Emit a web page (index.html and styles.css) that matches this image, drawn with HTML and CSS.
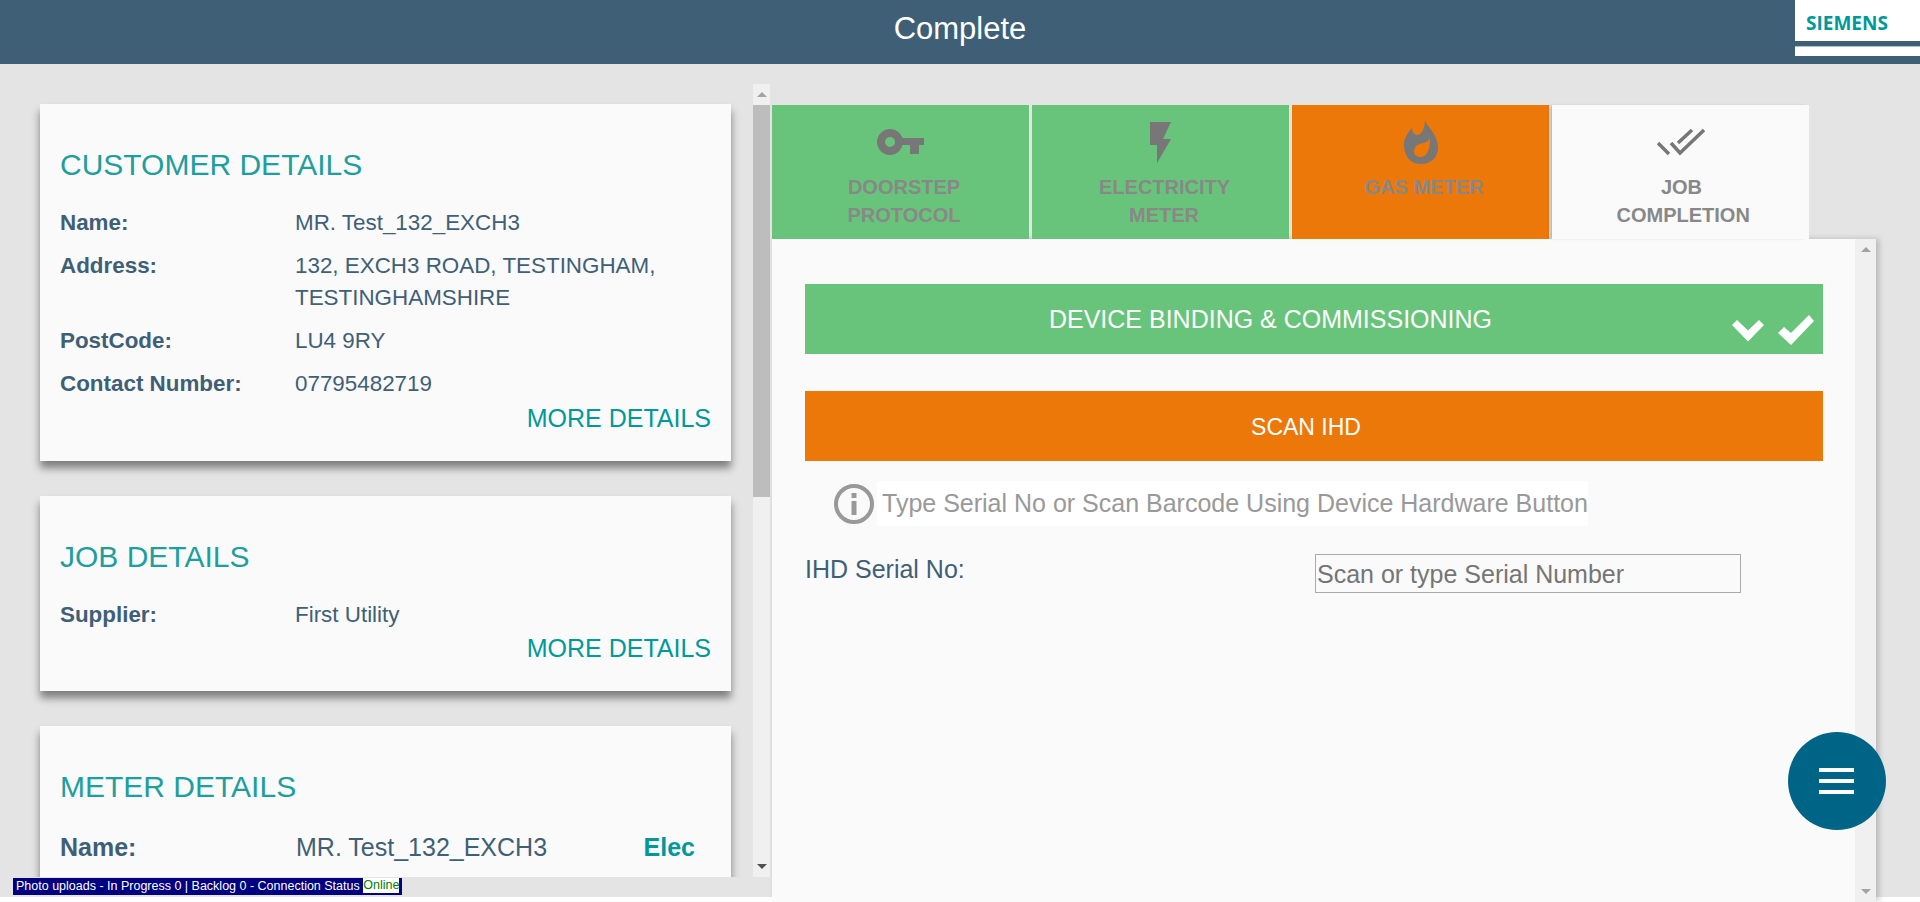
FILE: index.html
```html
<!DOCTYPE html>
<html>
<head>
	<title>Complete</title>
	<link rel="stylesheet" href="styles.css">
</head>
<body>
	<header class="topbar">
		<span></span>
		<h1 class="page-title">Complete</h1>
		<div class="logo">
			<div class="logo-text">SIEMENS</div>
			<div class="logo-strip"></div>
		</div>
	</header>

	<div class="main">
		<div class="left-col">
			<div class="left-pane">
				<div class="cards">
					<section class="card">
						<h2 class="card-title">CUSTOMER DETAILS</h2>
						<div class="details">
							<div class="label">Name:</div><div class="value">MR. Test_132_EXCH3</div>
							<div class="label">Address:</div><div class="value">132, EXCH3 ROAD, TESTINGHAM, TESTINGHAMSHIRE</div>
							<div class="label">PostCode:</div><div class="value">LU4 9RY</div>
							<div class="label">Contact Number:</div><div class="value">07795482719</div>
						</div>
						<div class="more more-customer">MORE DETAILS</div>
					</section>
					<section class="card">
						<h2 class="card-title">JOB DETAILS</h2>
						<div class="details">
							<div class="label">Supplier:</div><div class="value">First Utility</div>
						</div>
						<div class="more">MORE DETAILS</div>
					</section>
					<section class="card card-meter">
						<h2 class="card-title">METER DETAILS</h2>
						<div class="meter-row">
							<div class="label">Name:</div>
							<div class="value">MR. Test_132_EXCH3</div>
							<div class="meter-type">Elec</div>
						</div>
					</section>
				</div>
				<div class="scrollbar scrollbar-left">
					<div class="arrow-box"><span class="arrow-up"></span></div>
					<div class="thumb"></div>
					<div class="track"></div>
					<div class="arrow-box"><span class="arrow-down arrow-dark"></span></div>
				</div>
			</div>
			<div class="status-strip">
				<div class="status">Photo uploads - In Progress 0 | Backlog 0 - Connection Status <span class="online">Online</span></div>
			</div>
		</div>

		<div class="right-col">
			<div class="tabs">
				<div class="tab tab-done">
					<div class="tab-icon">
						<svg width="47" height="26" viewBox="0 0 47 26"><path fill-rule="evenodd" fill="#777" d="M13 0C19 0 24 4 25.500 9H47V16H42V25H33V16H25.500C24 22 19 26 13 26C6 26 0 20 0 13C0 6 6 0 13 0ZM13 8A5 5 0 1 0 13 18A5 5 0 1 0 13 8Z"/></svg>
					</div>
					<div class="tab-label">DOORSTEP PROTOCOL</div>
				</div>
				<div class="tab tab-done">
					<div class="tab-icon">
						<svg width="21" height="41" viewBox="0 0 21 41"><polygon fill="#777" points="0,0 21,0 13,17 21,17 7,41 7,23 0,23"/></svg>
					</div>
					<div class="tab-label">ELECTRICITY METER</div>
				</div>
				<div class="tab tab-active">
					<div class="tab-icon">
						<svg width="34" height="44" viewBox="0 0 34 44"><path fill-rule="evenodd" fill="#777" d="M21 0C22 6 34 14 34 28C34 37 27 44 17 44C7 44 0 37 0 25C0 17 5 11 8 8C8 11 10 15 13 15C18 15 21 8 21 0ZM26 18C24 22 20 23 16 24C12 25 10 28 10 32C10 35 13 37 17 37C22 37 26 32 26 18Z"/></svg>
					</div>
					<div class="tab-label">GAS METER</div>
				</div>
				<div class="tab tab-todo">
					<div class="tab-icon">
						<svg width="48" height="28" viewBox="0 0 48 28"><path fill="none" stroke="#777" stroke-width="3.500" d="M1 15L12 26M14 15L23 25L47 2M21 15L35 2"/></svg>
					</div>
					<div class="tab-label">JOB COMPLETION</div>
				</div>
			</div>

			<div class="panel">
				<div class="panel-body">
					<div class="bar bar-green">
						DEVICE BINDING &amp; COMMISSIONING
						<div class="bar-checks">
							<svg width="32" height="23" viewBox="0 0 32 23"><polygon fill="#fff" points="0,6 5,1 16,11.500 27,1 32,6 16,22.500"/></svg>
							<svg width="36" height="30" viewBox="0 0 36 30"><polygon fill="#fff" points="0,18 6,12 13,18 31,0 36,6 13,30"/></svg>
						</div>
					</div>
					<div class="bar bar-orange">SCAN IHD</div>
					<div class="hint">
						<svg width="40" height="40" viewBox="0 0 40 40">
							<circle cx="20" cy="20" r="18" fill="none" stroke="#999" stroke-width="4"/>
							<rect x="17.500" y="9" width="5" height="5" fill="#999"/>
							<rect x="17.500" y="17" width="5" height="14" fill="#999"/>
						</svg>
						<span class="hint-text">Type Serial No or Scan Barcode Using Device Hardware Button</span>
					</div>
					<div class="field">
						<label class="field-label">IHD Serial No:</label>
						<input class="field-input" type="text" placeholder="Scan or type Serial Number">
					</div>
				</div>
				<div class="scrollbar scrollbar-panel">
					<div class="arrow-box"><span class="arrow-up"></span></div>
					<div class="track"></div>
					<div class="arrow-box"><span class="arrow-down"></span></div>
				</div>
			</div>

			<div class="fab">
				<span class="fab-line"></span>
				<span class="fab-line"></span>
				<span class="fab-line"></span>
			</div>
		</div>
	</div>
</body>
</html>
```

FILE: styles.css
```css
* {
	box-sizing: border-box;
}
html, body {
	margin: 0;
	height: 902px;
	overflow: hidden;
}
body {
	background-color: #fff;
	font-family: "Liberation Sans", Arial, sans-serif;
	color: #3f5f76;
}

/* top bar */
.topbar {
	display: grid;
	grid-template-columns: 1fr auto 1fr;
	height: 64px;
	background-color: #3f5f76;
}
.page-title {
	margin: 0;
	color: #fff;
	font-size: 31px;
	font-weight: normal;
	line-height: 58px;
}
.logo {
	justify-self: end;
	width: 125px;
	height: 56px;
	background-color: #fff;
}
.logo-text {
	height: 41px;
	padding: 12px 0 0 11px;
	color: #009999;
	font-family: "Open Sans", sans-serif;
	font-size: 19px;
	font-weight: bold;
	line-height: 22px;
}
.logo-strip {
	height: 6px;
	background-color: #3f5f76;
	border-bottom: 1px solid #b4c0ca;
}

/* main area */
.main {
	display: flex;
	align-items: flex-start;
	height: 833px;
	background-color: #e4e4e4;
}
.left-col {
	width: 772px;
	padding-top: 20px;
}
.left-pane {
	display: flex;
	height: 793px;
}
.cards {
	width: 753px;
	padding: 20px 22px 0 40px;
	overflow: hidden;
}
.card {
	margin-bottom: 35px;
	padding: 40px 20px 28px 20px;
	background-color: #fafafa;
	box-shadow: 0 7px 8px rgba(0, 0, 0, 0.45);
}
.card-meter {
	height: 300px;
}
.card-title {
	margin: 0 0 21px 0;
	color: #1f9e9e;
	font-size: 30px;
	font-weight: normal;
	line-height: 42px;
}
.details {
	display: grid;
	grid-template-columns: 235px 1fr;
	row-gap: 11px;
	font-size: 22.400px;
	line-height: 32px;
}
.label {
	font-weight: bold;
}
.more {
	margin-top: 2px;
	color: #009999;
	font-size: 25px;
	line-height: 30px;
	text-align: right;
}
.more-customer {
	margin-top: 3px;
}
.meter-row {
	display: grid;
	grid-template-columns: 236px 1fr auto;
	padding-right: 16px;
	font-size: 25px;
	line-height: 36px;
}
.meter-type {
	color: #009999;
	font-size: 25px;
	font-weight: bold;
}

/* fake scrollbars */
.scrollbar {
	display: flex;
	flex-direction: column;
	background-color: #f0f0f0;
}
.scrollbar-left {
	width: 17px;
}
.scrollbar-panel {
	width: 21px;
}
.arrow-box {
	display: flex;
	align-items: center;
	justify-content: center;
	height: 21px;
}
.arrow-up, .arrow-down {
	width: 0;
	height: 0;
	border-left: 5px solid transparent;
	border-right: 5px solid transparent;
}
.arrow-up {
	border-bottom: 5px solid #a3a3a3;
}
.arrow-down {
	border-top: 5px solid #a3a3a3;
}
.arrow-dark {
	border-top-color: #505050;
}
.thumb {
	height: 392px;
	background-color: #bdbdbd;
}
.track {
	flex: 1;
}

/* status strip under the left pane */
.status-strip {
	height: 20px;
	padding: 1px 0 0 13px;
}
.status {
	display: inline-block;
	height: 17px;
	padding: 0 3px 0 3px;
	background-color: #000080;
	color: #fff;
	font-size: 12.500px;
	line-height: 16px;
	vertical-align: top;
}
.online {
	display: inline-block;
	height: 15px;
	background-color: #fff;
	color: #008000;
	line-height: 15px;
	vertical-align: top;
}

/* right column */
.right-col {
	position: relative;
	width: 1104px;
	padding-top: 41px;
}
.tabs {
	display: grid;
	grid-template-columns: repeat(4, 1fr);
	gap: 3px;
	width: 1037px;
	height: 134px;
}
.tab {
	padding: 15px 0 0 7px;
	text-align: center;
}
.tab-done {
	background-color: #68c47a;
}
.tab-active {
	background-color: #eb7809;
}
.tab-todo {
	padding-left: 2px;
	background-color: #fafafa;
	box-shadow: -3px 0 3px -1px rgba(0, 0, 0, 0.2);
}
.tab-icon {
	display: flex;
	align-items: center;
	justify-content: center;
	height: 44px;
	margin: 0 0 9px -7px;
}
.tab-todo .tab-icon {
	margin-left: -2px;
}
.tab-label {
	width: 130px;
	margin: 0 auto;
	color: #888;
	font-size: 20px;
	font-weight: bold;
	line-height: 28px;
}

.panel {
	display: flex;
	height: 663px;
	background-color: #fafafa;
	box-shadow: 3px 0 6px rgba(0, 0, 0, 0.2);
}
.panel-body {
	flex: 1;
	padding: 45px 32px 0 33px;
}
.bar {
	position: relative;
	height: 70px;
	color: #fff;
	line-height: 70px;
	text-align: center;
}
.bar-green {
	margin-bottom: 37px;
	padding-right: 87px;
	background-color: #68c47a;
	font-size: 25px;
}
.bar-orange {
	padding-right: 16px;
	background-color: #eb7809;
	font-size: 23px;
	line-height: 72px;
}
.bar-checks {
	position: absolute;
	right: 9px;
	bottom: 9px;
	display: flex;
	align-items: center;
	gap: 14px;
	line-height: 0;
}
.hint {
	display: flex;
	align-items: center;
	gap: 3px;
	margin: 20px 0 0 29px;
}
.hint-text {
	padding: 0 0 0 5px;
	background-color: #fff;
	color: #999;
	font-size: 25px;
	line-height: 45px;
}
.field {
	display: flex;
	align-items: flex-start;
	margin-top: 28px;
}
.field-label {
	width: 510px;
	font-size: 25px;
	line-height: 31px;
}
.field-input {
	width: 426px;
	height: 39px;
	padding: 2px 1px 0 1px;
	background-color: #fafafa;
	border: 1px solid #aaa;
	border-radius: 0;
	font-family: "Liberation Sans", Arial, sans-serif;
	font-size: 25px;
}
.field-input::placeholder {
	color: #757575;
}

/* round menu button */
.fab {
	position: absolute;
	left: 1016px;
	top: 668px;
	display: flex;
	flex-direction: column;
	align-items: center;
	justify-content: center;
	gap: 7px;
	width: 98px;
	height: 98px;
	padding-right: 2px;
	background-color: #006487;
	border-radius: 50%;
}
.fab-line {
	width: 35px;
	height: 4px;
	background-color: #fff;
}
```
